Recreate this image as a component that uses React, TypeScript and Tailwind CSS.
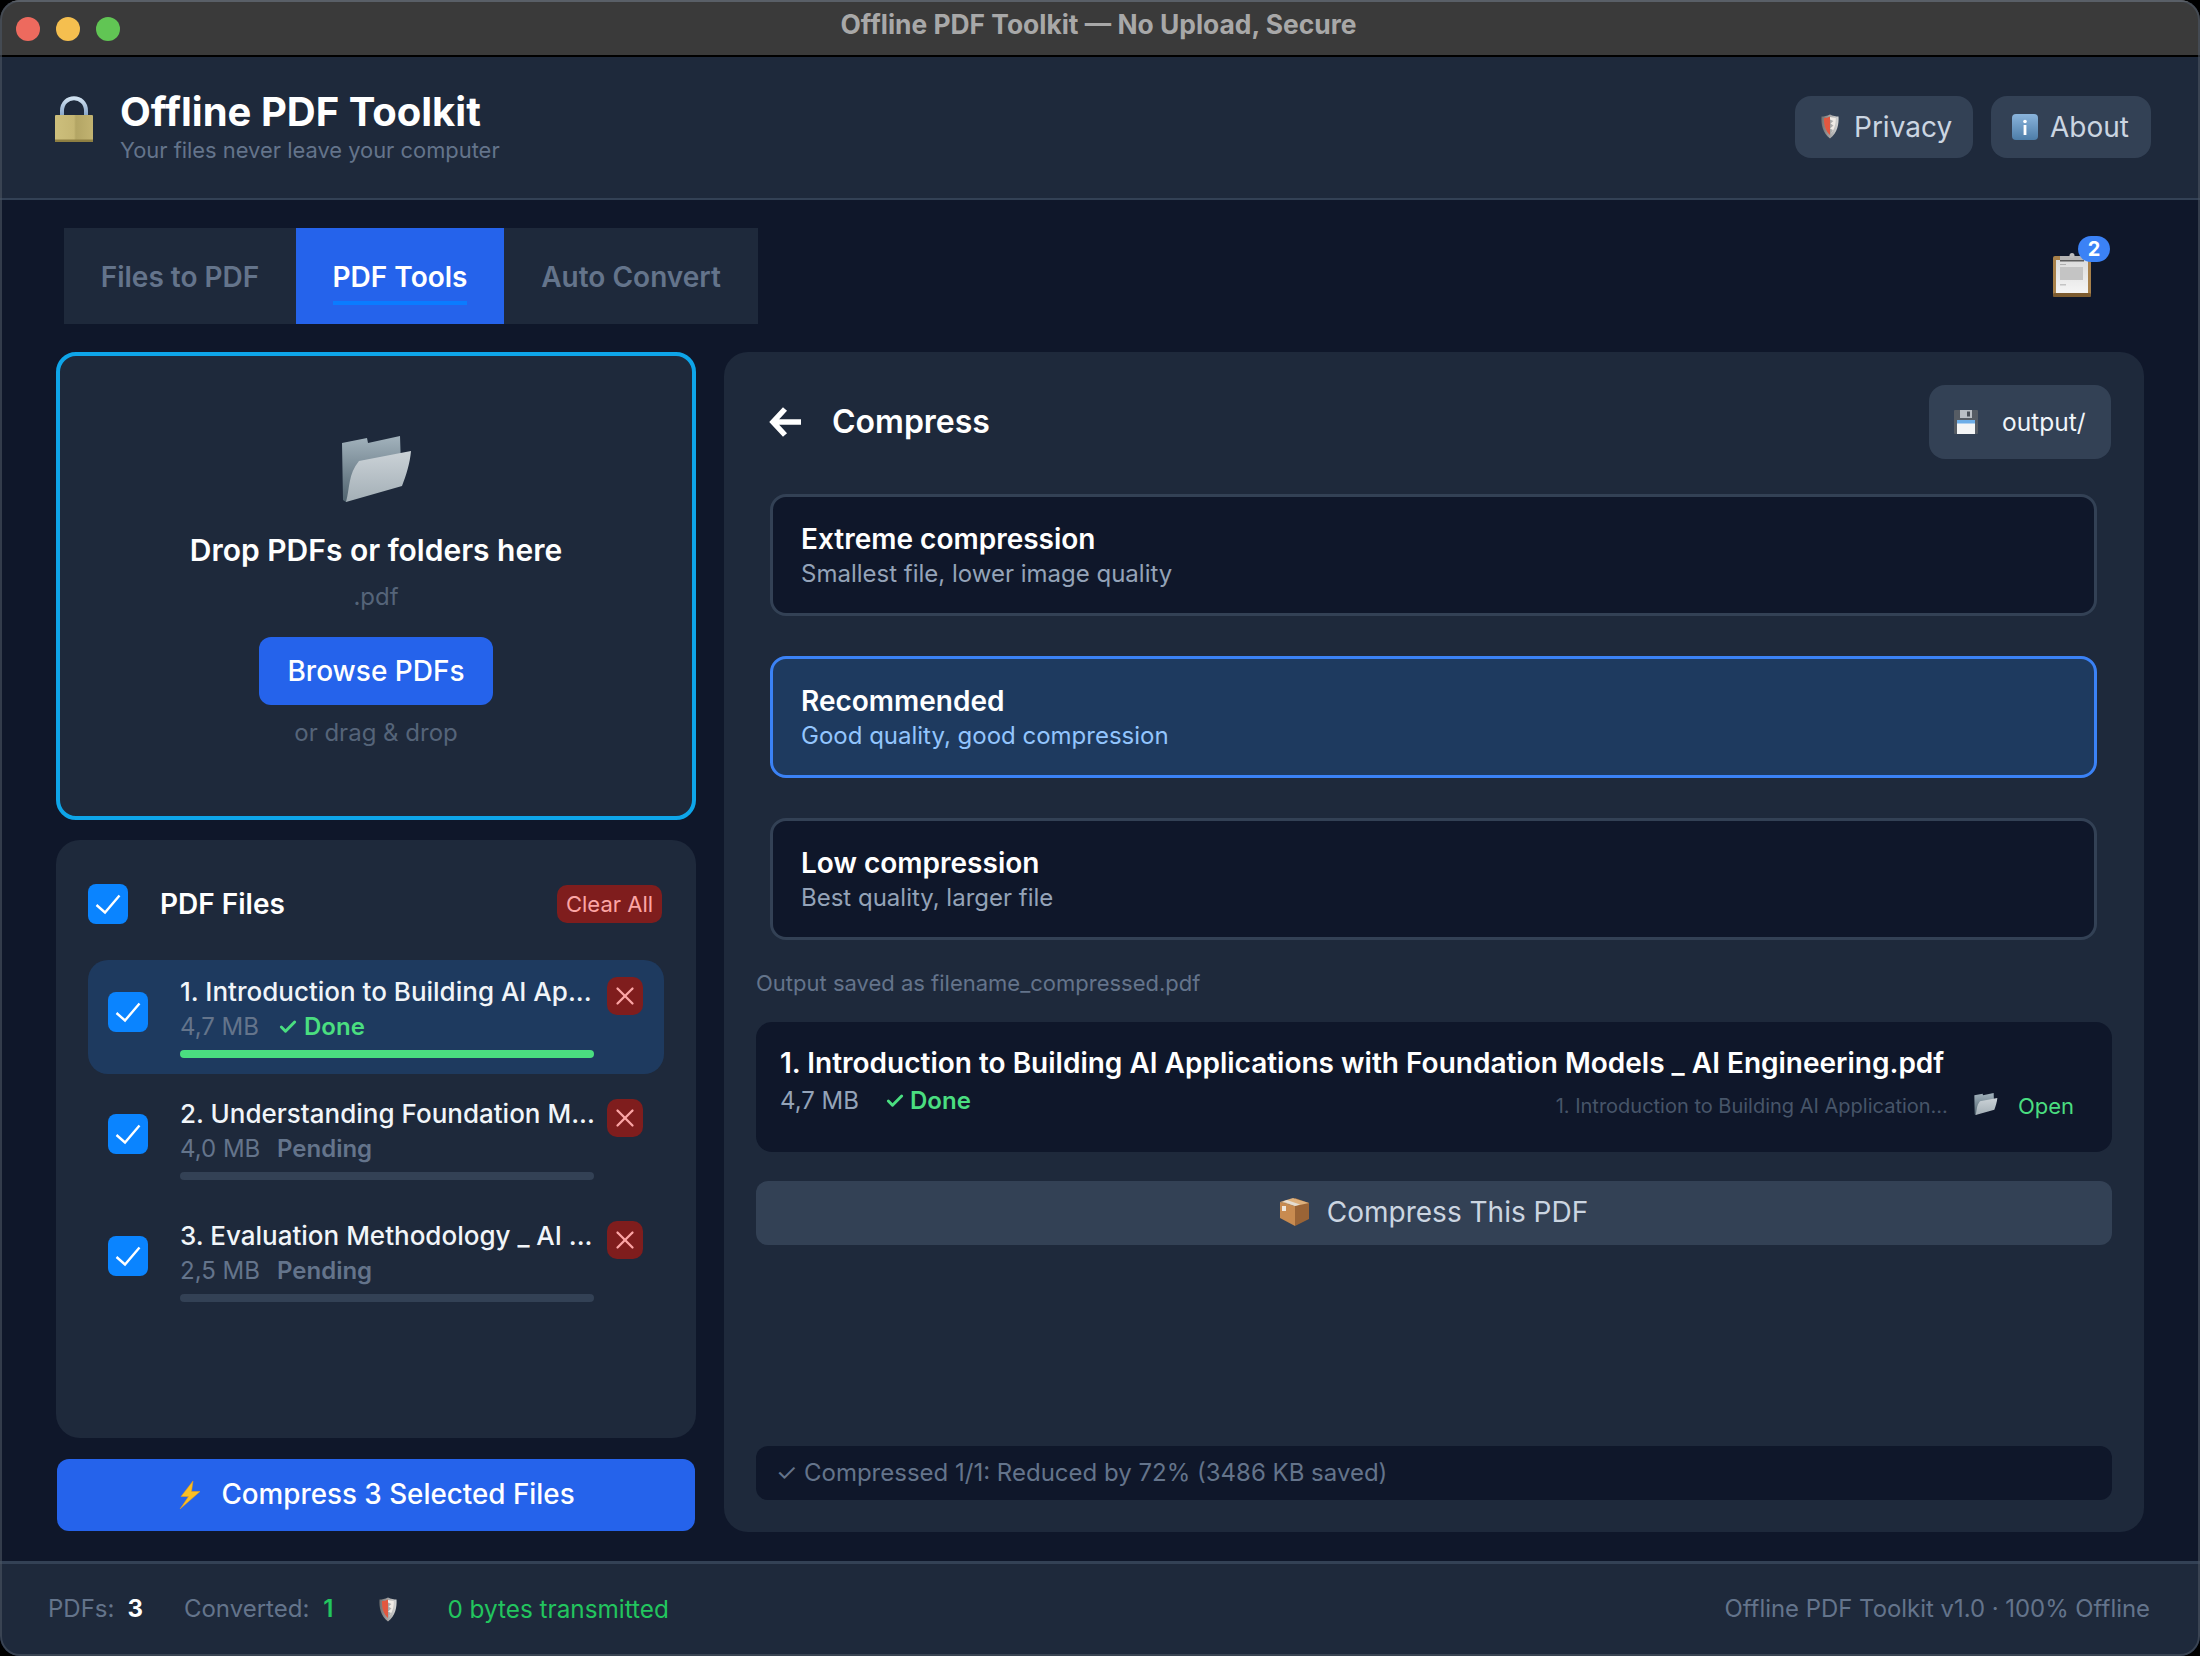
import { Check, X } from "lucide-react"

function LockIcon() {
  return (
    <svg width="38" height="46" viewBox="0 0 38 46">
      <defs>
        <linearGradient id="lockShackle" x1="0" y1="0" x2="0" y2="1">
          <stop offset="0" stopColor="#cfe0f0" />
          <stop offset="1" stopColor="#7f9fc4" />
        </linearGradient>
        <linearGradient id="lockBody" x1="0" y1="0" x2="1" y2="0">
          <stop offset="0" stopColor="#cdbf7c" />
          <stop offset="0.5" stopColor="#c5b673" />
          <stop offset="0.55" stopColor="#b3a564" />
          <stop offset="1" stopColor="#c2b371" />
        </linearGradient>
      </defs>
      <path d="M7 22V15C7-2 31-2 31 15V22" fill="none" stroke="url(#lockShackle)" strokeWidth="4" />
      <rect x="0" y="19" width="38" height="27" rx="1" fill="url(#lockBody)" />
      <rect x="0" y="43.5" width="38" height="2.5" fill="#8e7f42" />
    </svg>
  )
}

function ShieldIcon({ id }: { id: string }) {
  return (
    <svg width="18" height="25" viewBox="0 0 18 25">
      <defs>
        <linearGradient id={id} x1="0" y1="0" x2="1" y2="0">
          <stop offset="0" stopColor="#6f6f6f" />
          <stop offset="1" stopColor="#d8d8d8" />
        </linearGradient>
      </defs>
      <path d="M9 0.5C6 2 3 2.5 0.5 2.5C0 10 1.5 19 9 24.5C16.5 19 18 10 17.5 2.5C15 2.5 12 2 9 0.5Z" fill={`url(#${id})`} />
      <path d="M3 4C5 4 7 3.5 9 2.5V21C4.5 17 2.8 11 3 4Z" fill="#e2573f" />
      <path d="M9 3C10.5 3.4 13 3.9 14.8 4C14.9 9 14 15 9.5 20.5L12 16L9 14.5L12.5 11.5L9.5 9.5L12.5 7L9 5.5Z" fill="#f0ebe6" />
    </svg>
  )
}

function InfoIcon() {
  return (
    <svg width="26" height="26" viewBox="0 0 26 26">
      <defs>
        <linearGradient id="infoBg" x1="0" y1="0" x2="0" y2="1">
          <stop offset="0" stopColor="#8ab4dc" />
          <stop offset="1" stopColor="#4d7da8" />
        </linearGradient>
      </defs>
      <rect width="26" height="26" rx="4" fill="url(#infoBg)" />
      <circle cx="13" cy="7.5" r="1.8" fill="#fff" />
      <rect x="11.6" y="11" width="2.8" height="10" fill="#fff" />
    </svg>
  )
}

function ClipboardIcon() {
  return (
    <svg width="38" height="44" viewBox="0 0 38 44">
      <defs>
        <linearGradient id="clipPaper" x1="0" y1="0" x2="0" y2="1">
          <stop offset="0" stopColor="#dcdcdc" />
          <stop offset="1" stopColor="#f5f5f5" />
        </linearGradient>
      </defs>
      <rect x="0" y="3" width="38" height="41" rx="2" fill="#a8814a" />
      <rect x="0" y="40" width="38" height="4" rx="1.5" fill="#7d5c30" />
      <rect x="3" y="7" width="32" height="33" fill="url(#clipPaper)" />
      <rect x="7" y="3" width="24" height="4" fill="#b4b4b4" />
      <rect x="7" y="7" width="24" height="1.5" fill="#5c5c5c" />
      <circle cx="19" cy="2.5" r="2.5" fill="#bdbdbd" />
      <rect x="7" y="14" width="23" height="13" fill="#c4c4c4" />
      <rect x="7" y="11" width="6" height="1" fill="#b0b0b0" />
      <rect x="7" y="31" width="6" height="1.5" fill="#c4c4c4" />
    </svg>
  )
}

function SaveIcon() {
  return (
    <svg width="24" height="24" viewBox="0 0 24 24">
      <rect width="24" height="24" rx="1" fill="#565c64" />
      <rect x="6" y="0" width="12" height="8" fill="#b9bec4" />
      <rect x="13" y="1.5" width="3" height="5" fill="#4a5058" />
      <rect x="3" y="10" width="18" height="14" fill="#f4f5f6" />
      <rect x="3" y="10" width="18" height="3.5" fill="#6eaee8" />
    </svg>
  )
}

function FolderIcon({ id, className }: { id: string; className: string }) {
  return (
    <svg className={className} viewBox="0 0 70 66">
      <defs>
        <linearGradient id={`${id}Back`} x1="0" y1="0" x2="0" y2="1">
          <stop offset="0" stopColor="#a3b3bd" />
          <stop offset="1" stopColor="#4f626e" />
        </linearGradient>
        <linearGradient id={`${id}Front`} x1="0" y1="0" x2="0" y2="1">
          <stop offset="0" stopColor="#cbd2d7" />
          <stop offset="1" stopColor="#a3afb6" />
        </linearGradient>
      </defs>
      <path d="M0 7L25 2L26 7L58 0L59 30L4 66L1 64Z" fill={`url(#${id}Back)`} />
      <path d="M17 25L69 15C68 27 64 40 60 50L4 66C8 52 6 38 17 25Z" fill={`url(#${id}Front)`} />
    </svg>
  )
}

function BoltIcon() {
  return (
    <svg width="22" height="28" viewBox="0 0 22 28">
      <path d="M14 0L2 15.5H9.5L1 28L21 10.5H12.5Z" fill="#fbbf24" stroke="#f59e0b" strokeWidth="0.5" />
    </svg>
  )
}

function PackageIcon() {
  return (
    <svg width="30" height="28" viewBox="0 0 30 28">
      <path d="M15 0L29 5V21L15 28Z" fill="#9a6436" />
      <path d="M15 8L0 4V20L15 28Z" fill="#c88b50" />
      <path d="M0 4L13 0L29 5L15 8Z" fill="#deb07c" />
      <path d="M7 2L20 6.5L15 8L3 3.5Z" fill="#e4ddd2" />
      <rect x="2" y="8" width="4" height="5" fill="#efe7dc" />
    </svg>
  )
}

function BlueCheck() {
  return (
    <div className="flex h-10 w-10 shrink-0 items-center justify-center rounded-lg bg-[#0a84ff]">
      <svg width="40" height="40" viewBox="0 0 40 40" fill="none">
        <path d="M8.5 21L17 28.5L31.5 11.5" stroke="#fff" strokeWidth="2.4" />
      </svg>
    </div>
  )
}

const files = [
  { name: "1. Introduction to Building AI Ap...", size: "4,7 MB", done: true },
  { name: "2. Understanding Foundation M...", size: "4,0 MB", done: false },
  { name: "3. Evaluation Methodology _ AI ...", size: "2,5 MB", done: false },
]

const options = [
  { title: "Extreme compression", desc: "Smallest file, lower image quality", active: false },
  { title: "Recommended", desc: "Good quality, good compression", active: true },
  { title: "Low compression", desc: "Best quality, larger file", active: false },
]

export default function App() {
  return (
    <div className="h-[1656px] w-[2200px] bg-black [font-family:Inter,sans-serif]">
      <div className="relative flex h-full flex-col overflow-hidden rounded-[20px] bg-[#0f172a]">
        {/* Title bar */}
        <div className="grid h-[57px] shrink-0 grid-cols-[1fr_auto_1fr] items-center border-t-2 border-b-2 border-t-[#6f6f6f] border-b-black bg-[#3a3a3a] px-4">
          <div className="flex gap-4">
            <span className="h-6 w-6 rounded-full bg-[#ed6a5e]" />
            <span className="h-6 w-6 rounded-full bg-[#f5bf4f]" />
            <span className="h-6 w-6 rounded-full bg-[#61c554]" />
          </div>
          <div className="-ml-[3px] pb-[8px] text-[26.4px] font-bold text-[#a8a8a8]">Offline PDF Toolkit — No Upload, Secure</div>
          <div />
        </div>

        {/* Header */}
        <div className="flex h-[143px] shrink-0 items-center justify-between border-b-2 border-[#334155] bg-[#1e293b] pr-[49px] pl-[55px]">
          <div className="flex items-start">
            <div className="mt-[6px]">
              <LockIcon />
            </div>
            <div className="ml-[27px]">
              <div className="text-[40px] leading-[44px] font-bold text-white">Offline PDF Toolkit</div>
              <div className="mt-[1px] text-[21.9px] leading-[30px] text-[#64748b]">Your files never leave your computer</div>
            </div>
          </div>
          <div className="mb-[2px] flex gap-[18px]">
            <button className="flex h-[62px] w-[178px] items-center rounded-2xl bg-[#334155] pl-[26px] text-[28px] text-[#cbd5e1]">
              <ShieldIcon id="shieldTop" />
              <span className="ml-[15px]">Privacy</span>
            </button>
            <button className="flex h-[62px] w-[160px] items-center rounded-2xl bg-[#334155] pl-[21px] text-[28px] text-[#cbd5e1]">
              <InfoIcon />
              <span className="ml-[12px]">About</span>
            </button>
          </div>
        </div>

        {/* Main */}
        <div className="flex flex-1 flex-col px-14 pt-[28px]">
          <div className="flex h-24 shrink-0 items-center justify-between">
            <div className="ml-2 flex h-full bg-[#1e293b] text-[28px] font-semibold text-[#64748b]">
              <div className="w-[232px] pt-[28px] text-center">
                <span className="inline-block border-b-4 border-transparent pb-2 leading-[32px]">Files to PDF</span>
              </div>
              <div className="w-[208px] bg-[#2563eb] pt-[28px] text-center text-white">
                <span className="inline-block border-b-4 border-[#0a7cff] pb-2 leading-[32px]">PDF Tools</span>
              </div>
              <div className="w-[254px] pt-[28px] text-center">
                <span className="inline-block border-b-4 border-transparent pb-2 leading-[32px]">Auto Convert</span>
              </div>
            </div>
            <div className="relative mt-[-2px] mr-[53px] h-11 w-[38px]">
              <ClipboardIcon />
              <span className="absolute top-[-17px] left-[25px] flex h-[26px] w-8 items-center justify-center rounded-full bg-[#3b82f6] text-[20px] font-bold text-white">2</span>
            </div>
          </div>

          <div className="mt-7 flex h-[1180px] gap-7">
            {/* Left column */}
            <div className="flex w-[640px] shrink-0 flex-col">
              <div className="mb-5 flex h-[468px] flex-col items-center rounded-[20px] border-4 border-[#0ea5e9] bg-[#1e293b] pt-[80px]">
                <FolderIcon id="dropFolder" className="ml-[2px] h-[66px] w-[70px]" />
                <div className="mt-[28px] text-[30px] leading-10 font-semibold text-white">Drop PDFs or folders here</div>
                <div className="mt-[11px] text-[24px] leading-8 text-[#556479]">.pdf</div>
                <button className="mt-6 h-[68px] w-[234px] rounded-xl bg-[#2563eb] text-[28px] font-medium text-white">Browse PDFs</button>
                <div className="mt-3 text-[24px] leading-8 text-[#556479]">or drag &amp; drop</div>
              </div>

              <div className="mb-[21px] h-[598px] rounded-3xl bg-[#1e293b] px-8 pt-11">
                <div className="flex h-10 items-center">
                  <BlueCheck />
                  <span className="ml-8 text-[28px] font-semibold text-white">PDF Files</span>
                  <button className="mr-[2px] ml-auto flex h-[38px] w-[105px] items-center justify-center rounded-[10px] bg-[#7f1d1d] text-[22px] text-[#fca5a5]">Clear All</button>
                </div>
                <div className="mt-9 flex flex-col gap-2">
                  {files.map((f) => (
                    <div key={f.name} className={`flex h-[114px] items-start rounded-[20px] pr-[21px] pl-5 ${f.done ? "bg-[#1e3a5f]" : ""}`}>
                      <div className="mt-8 mr-8">
                        <BlueCheck />
                      </div>
                      <div className="mt-[14px] w-[414px]">
                        <div className="text-[26px] leading-9 font-medium whitespace-nowrap text-[#f1f5f9]">{f.name}</div>
                        <div className="mt-px flex h-8 items-center text-[24px] text-[#64748b]">
                          <span className="w-[98px]">{f.size}</span>
                          {f.done ? (
                            <span className="flex items-center font-semibold text-[#4ade80]">
                              <Check size={20} strokeWidth={3.5} className="mr-[6px]" />
                              Done
                            </span>
                          ) : (
                            <span className="-ml-[1px] font-semibold">Pending</span>
                          )}
                        </div>
                        <div className={`mt-[7px] h-2 rounded-full ${f.done ? "bg-[#4ade80]" : "bg-[#334155]"}`} />
                      </div>
                      <button className="mt-[17px] ml-[13px] flex h-[38px] w-9 items-center justify-center rounded-[10px] bg-[#7f1d1d]">
                        <X size={30} strokeWidth={1.8} className="text-[#fca5a5]" />
                      </button>
                    </div>
                  ))}
                </div>
              </div>

              <button className="mx-px flex h-[72px] items-center justify-center rounded-xl bg-[#2563eb] pb-[1px] pl-[2px] text-[27.8px] font-medium text-white">
                <BoltIcon />
                <span className="ml-[20px]">Compress 3 Selected Files</span>
              </button>
            </div>

            {/* Right panel */}
            <div className="flex flex-1 flex-col rounded-3xl bg-[#1e293b] pt-[33px] pr-8 pb-8 pl-8">
              <div className="flex h-[74px] shrink-0 items-center justify-between">
                <div className="flex items-center pl-[13px]">
                  <svg width="32" height="30" viewBox="0 0 32 30" fill="none">
                    <path d="M16 2L4 15L16 28M4 15H32" stroke="#fff" strokeWidth="5.5" />
                  </svg>
                  <span className="ml-[31px] text-[32px] font-semibold text-white">Compress</span>
                </div>
                <button className="mr-px flex h-[74px] w-[182px] items-center rounded-2xl bg-[#334155] pl-[25px] text-[24.5px] text-[#f1f5f9]">
                  <SaveIcon />
                  <span className="ml-6">output/</span>
                </button>
              </div>

              <div className="mt-[35px] mr-[15px] ml-[14px] flex flex-col gap-10">
                {options.map((o) => (
                  <div key={o.title} className={`flex h-[122px] flex-col justify-center rounded-2xl border-[3px] px-[28px] pt-[2px] ${o.active ? "border-[#3b82f6] bg-[#1e3a5f]" : "border-[#334155] bg-[#0f172a]"}`}>
                    <div className="text-[28px] leading-[34px] font-semibold text-white">{o.title}</div>
                    <div className={`mt-[1px] text-[24px] leading-[34px] ${o.active ? "text-[#93c5fd]" : "text-[#94a3b8]"}`}>{o.desc}</div>
                  </div>
                ))}
              </div>

              <div className="mt-[27px] text-[22px] leading-8 text-[#64748b]">Output saved as filename_compressed.pdf</div>

              <div className="mt-[23px] h-[130px] rounded-2xl bg-[#0f172a] pt-[21px] pr-[38px] pl-[24px]">
                <div className="text-[28px] leading-10 font-semibold whitespace-nowrap text-white">1. Introduction to Building AI Applications with Foundation Models _ AI Engineering.pdf</div>
                <div className="flex items-start">
                  <span className="mt-[2px] w-[105px] text-[24px] leading-8 text-[#94a3b8]">4,7 MB</span>
                  <span className="mt-[2px] flex items-center text-[24px] leading-8 font-semibold text-[#4ade80]">
                    <Check size={20} strokeWidth={3.5} className="mr-[5px]" />
                    Done
                  </span>
                  <span className="mt-[7px] ml-auto text-[20px] leading-8 text-[#475569]">1. Introduction to Building AI Application...</span>
                  <FolderIcon id="cardFolder" className="mt-[10px] ml-[26px] h-[22px] w-[24px]" />
                  <span className="mt-[7px] ml-[20px] text-[22px] leading-8 text-[#4ade80]">Open</span>
                </div>
              </div>

              <button className="mt-[29px] flex h-16 shrink-0 items-center justify-center rounded-xl bg-[#334155] pb-[2px] text-[28px] text-[#cbd5e1]">
                <PackageIcon />
                <span className="ml-[17px]">Compress This PDF</span>
              </button>

              <div className="mt-auto flex h-[54px] shrink-0 items-center rounded-xl bg-[#0f172a] pl-[20px] text-[24px] text-[#64748b]">✓ Compressed 1/1: Reduced by 72% (3486 KB saved)</div>
            </div>
          </div>
        </div>

        {/* Footer */}
        <div className="flex h-[95px] shrink-0 items-center border-t-[3px] border-[#334155] bg-[#1e293b] pr-[50px] pb-[2px] pl-12 text-[24px]">
          <span className="text-[#64748b]">PDFs:</span>
          <span className="ml-[13px] font-bold text-white">3</span>
          <span className="ml-[41px] text-[#64748b]">Converted:</span>
          <span className="ml-[14px] font-semibold text-[#22c55e]">1</span>
          <span className="ml-[46px]">
            <ShieldIcon id="shieldBottom" />
          </span>
          <span className="ml-[50px] text-[24.3px] text-[#22c55e]">0 bytes transmitted</span>
          <span className="ml-auto text-[23.9px] text-[#64748b]">Offline PDF Toolkit v1.0 · 100% Offline</span>
        </div>

        <div className="pointer-events-none absolute inset-0 rounded-[20px] border-2 border-[#4b5563]/60" />
      </div>
    </div>
  )
}
